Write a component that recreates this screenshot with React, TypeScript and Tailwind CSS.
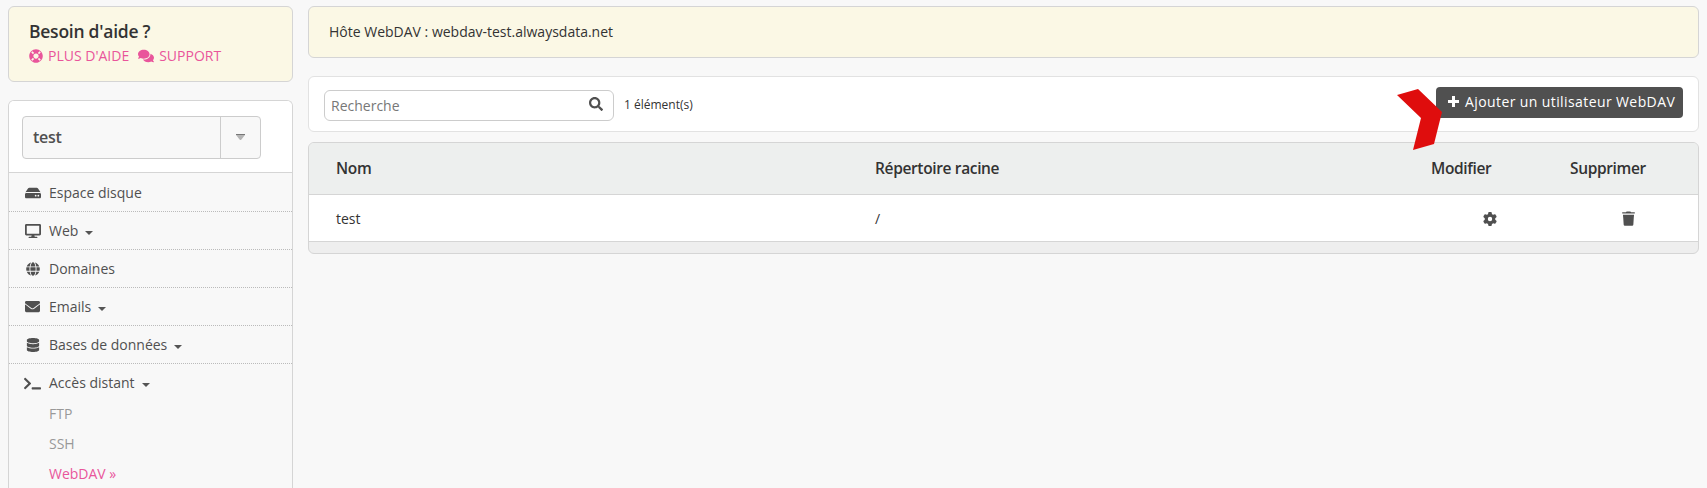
import React from 'react';
import { FaHdd, FaDesktop, FaGlobe, FaEnvelope, FaDatabase, FaTerminal, FaLifeRing, FaComments, FaSearch } from 'react-icons/fa';
import { FaGear } from 'react-icons/fa6';

const Caret = () => (
  <svg className="ml-[7px] mt-[4px] h-[4px] w-[8px]" viewBox="0 0 8 4" fill="#555">
    <path d="M0 0h8L4 4z" />
  </svg>
);

const Trash = () => (
  <svg className="ml-[52px] h-[15px] w-[13px]" viewBox="0 0 13 15" fill="#505050">
    <path d="M0.2 1.2H4L4.6 0.4H8.4L9 1.2H12.8V2.5H0.2Z" />
    <path d="M1 3.7H12L11.3 13.7Q11.2 14.7 10.2 14.7H2.8Q1.8 14.7 1.7 13.7Z" />
  </svg>
);

type ItemProps = { icon: React.ReactNode; label: string; caret?: boolean; last?: boolean };

const Item = ({ icon, label, caret, last }: ItemProps) => (
  <li className={`flex h-[38px] items-center ${last ? '' : 'border-b border-dotted border-[#bbb]'}`}>
    <span className="ml-[14px] mr-[7px] flex w-[19px] justify-center text-[#505050]">{icon}</span>
    <span>{label}</span>
    {caret && <Caret />}
  </li>
);

export default function App() {
  return (
    <div className="flex h-[488px] items-start gap-[15px] overflow-hidden bg-[#f8f8f8] pl-2 pr-2 pt-[6px] font-['Open_Sans',sans-serif] text-[14px] leading-5 text-[#333]">
      <aside className="w-[285px] shrink-0">
        <section className="h-[76px] rounded-[6px] border border-[#d5d5d5] bg-[#fbf8e5] pl-5 pt-[12px]">
          <h2 className="text-[17.5px] font-semibold leading-6 tracking-[-0.25px]">Besoin d'aide ?</h2>
          <div className="mt-[3px] flex items-center text-[#e9559b]">
            <FaLifeRing className="mr-[5px] size-[14px]" />
            <a>PLUS D'AIDE</a>
            <FaComments className="ml-[9px] mr-[5px] size-4" />
            <a>SUPPORT</a>
          </div>
        </section>
        <nav className="mt-[18px] h-[420px] rounded-t-[6px] border border-b-0 border-[#d5d5d5] bg-[#f8f8f8] text-[#505050]">
          <div className="h-[72px] rounded-t-[5px] border-b border-[#d5d5d5] bg-white pl-[13px] pt-[15px]">
            <div className="flex h-[43px] w-[239px] rounded-[4px] border border-[#ccc] bg-[#f8f8f8]">
              <span className="flex flex-1 items-center pb-[2px] pl-[10px] text-[16px] font-semibold tracking-[-0.3px]">test</span>
              <span className="flex w-[40px] items-center justify-center border-l border-[#ccc]">
                <svg className="mt-[-1px] h-[6px] w-[9px]" viewBox="0 0 9 6">
                  <path d="M0 0h9v1L5 6H4L0 1z" fill="#b5b5b5" />
                  <path d="M0 0h9v1H0z" fill="#777" />
                </svg>
              </span>
            </div>
          </div>
          <ul className="pt-px">
            <Item icon={<FaHdd size={16} />} label="Espace disque" />
            <Item icon={<FaDesktop size={16} />} label="Web" caret />
            <Item icon={<FaGlobe size={14} />} label="Domaines" />
            <Item icon={<FaEnvelope size={15} />} label="Emails" caret />
            <Item icon={<FaDatabase size={14} />} label="Bases de données" caret />
            <Item icon={<FaTerminal size={17} />} label="Accès distant" caret last />
          </ul>
          <ul className="-mt-[3px] pl-[40px] leading-[30px] text-[#999]">
            <li>FTP</li>
            <li>SSH</li>
            <li className="text-[#e9559b]">WebDAV »</li>
          </ul>
        </nav>
      </aside>
      <main className="min-w-0 flex-1">
        <section className="flex h-[52px] items-center rounded-[6px] border border-[#d5d5d5] bg-[#fbf8e5] pl-5">Hôte WebDAV : webdav-test.alwaysdata.net</section>
        <section className="mt-[18px] flex h-[56px] items-start rounded-[6px] border border-[#e2e2e2] bg-white pl-[15px] pr-[15px]">
          <div className="mt-[13px] flex h-[31px] w-[290px] items-center justify-between rounded-[6px] border border-[#ccc] pl-[6px] pr-[10px] text-[#777]">
            <span>Recherche</span>
            <FaSearch className="mt-[-3px] size-[14px] text-[#505050]" />
          </div>
          <span className="ml-[10px] mt-[18px] text-[12px]">1 élément(s)</span>
          <div className="relative ml-auto mt-[10px]">
            <button className="flex h-[31px] w-[247px] items-center rounded-[4px] bg-[#505050] pb-[2px] pl-3 tracking-[0.4px] text-white">
              <svg className="mr-[6px] size-[11px] shrink-0" viewBox="0 0 11 11" fill="white">
                <path d="M4 0h3v4h4v3H7v4H4V7H0V4h4z" />
              </svg>
              <span className="whitespace-nowrap">Ajouter un utilisateur WebDAV</span>
            </button>
            <svg className="absolute left-[-39px] top-[2px] h-[61px] w-[45px]" viewBox="0 0 45 61">
              <path d="M0 6L21 0L45 23L37 55L16 61L24 29Z" fill="#df0d0d" />
            </svg>
          </div>
        </section>
        <section className="mt-[10px] h-[112px] overflow-hidden rounded-[6px] border border-[#d5d5d5] bg-[#eee]">
          <div className="grid h-[52px] grid-cols-[539px_556px_139px_1fr] items-center border-b border-[#d5d5d5] bg-[#edefee] pb-[2px] pl-[27px] text-[15.5px] font-semibold tracking-[-0.35px]">
            <span>Nom</span><span>Répertoire racine</span><span>Modifier</span><span>Supprimer</span>
          </div>
          <div className="grid h-[47px] grid-cols-[539px_556px_139px_1fr] items-center border-b border-[#d5d5d5] bg-white pl-[27px] pt-px">
            <span>test</span><span>/</span>
            <FaGear className="ml-[52px] size-[14px] text-[#505050]" />
            <Trash />
          </div>
        </section>
      </main>
    </div>
  );
}
